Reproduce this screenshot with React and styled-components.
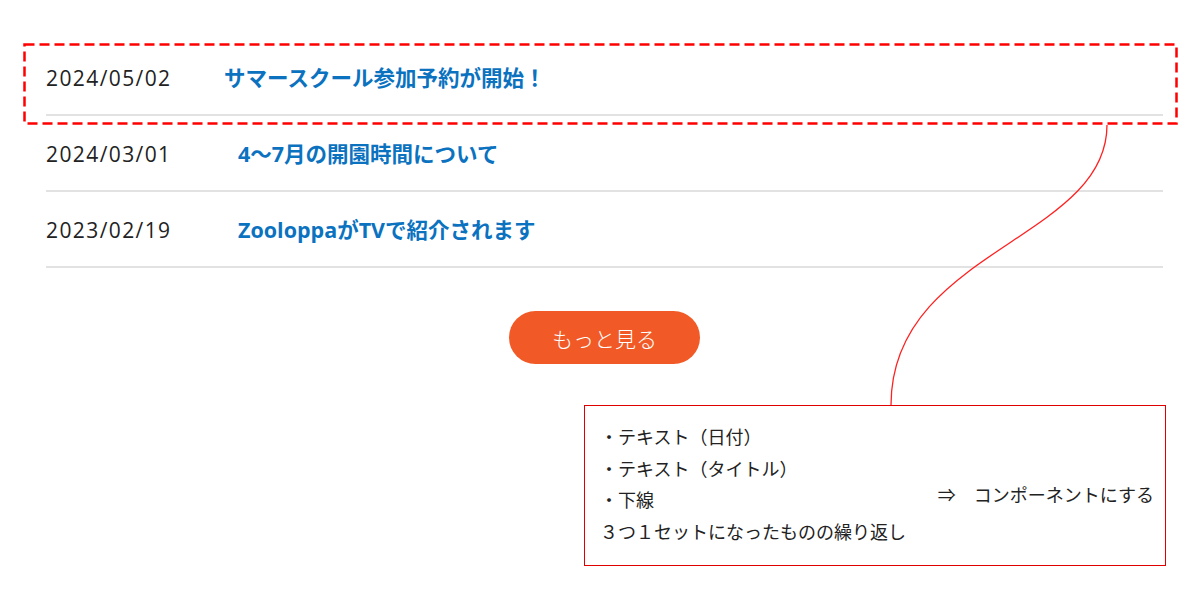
import React from 'react'
import styled, { createGlobalStyle } from 'styled-components'

const news = [
  { date: '2024/05/02', title: 'サマースクール参加予約が開始！', indent: 53 },
  { date: '2024/03/01', title: '4〜7月の開園時間について', indent: 67 },
  { date: '2023/02/19', title: 'ZooloppaがTVで紹介されます', indent: 67 },
]

const notes = [
  '・テキスト（日付）',
  '・テキスト（タイトル）',
  '・下線',
  '３つ１セットになったものの繰り返し',
]

function App() {
  return (
    <>
      <GlobalStyle />
      <Page>
        <NewsList>
          {news.map((item) => (
            <NewsRow key={item.date}>
              <NewsDate>{item.date}</NewsDate>
              <NewsTitle $indent={item.indent}>{item.title}</NewsTitle>
            </NewsRow>
          ))}
        </NewsList>
        <ButtonArea>
          <MoreButton>もっと見る</MoreButton>
        </ButtonArea>
        <NoteArea>
          <NoteBox>
            <NoteLines>
              {notes.map((n) => (
                <NoteLine key={n}>{n}</NoteLine>
              ))}
            </NoteLines>
            <NoteResult>⇒　コンポーネントにする</NoteResult>
          </NoteBox>
        </NoteArea>
        <Overlay width="1200" height="600" viewBox="0 0 1200 600">
          <rect
            x="24.5"
            y="44.5"
            width="1152"
            height="79"
            fill="none"
            stroke="#ff0000"
            strokeWidth="2.5"
            strokeDasharray="10 5"
          />
          <path
            d="M1107 125 C1107 240, 891 250, 891 405"
            fill="none"
            stroke="#ff2020"
            strokeWidth="1.3"
          />
        </Overlay>
      </Page>
    </>
  )
}

const GlobalStyle = createGlobalStyle`
  body {
    margin: 0;
    background: #ffffff;
    font-family: "Open Sans", "Noto Sans CJK JP", sans-serif;
  }
`

const Page = styled.div`
  position: relative;
  width: 1200px;
  height: 600px;
  padding: 40px 37px 0 46px;
  box-sizing: border-box;
  overflow: hidden;
`

const NewsList = styled.ul`
  list-style: none;
  margin: 0;
  padding: 0;
`

const NewsRow = styled.li`
  display: flex;
  align-items: center;
  height: 76px;
  box-sizing: border-box;
  border-bottom: 2px solid #e2e2e2;
`

const NewsDate = styled.span`
  width: 125px;
  font-size: 21px;
  color: #222222;
  letter-spacing: 1.4px;
  white-space: nowrap;
  margin-top: 2px;
`

const NewsTitle = styled.a`
  margin-left: ${(p) => p.$indent}px;
  margin-bottom: 2px;
  font-size: 21.5px;
  font-weight: 700;
  color: #0b72c0;
  text-decoration: none;
  white-space: nowrap;
`

const ButtonArea = styled.div`
  display: flex;
  justify-content: center;
  margin-top: 43px;
`

const MoreButton = styled.button`
  width: 191px;
  height: 53px;
  border: none;
  border-radius: 27px;
  background: #f15a26;
  color: #ffffff;
  font-family: "Noto Sans CJK JP", sans-serif;
  font-size: 21px;
  font-weight: 300;
  cursor: pointer;
`

const NoteArea = styled.div`
  display: flex;
  justify-content: flex-end;
  margin-top: 41px;
  margin-right: -3px;
`

const NoteBox = styled.div`
  display: flex;
  align-items: center;
  width: 582px;
  height: 161px;
  box-sizing: border-box;
  border: 1px solid #e00000;
  padding: 15px 11px 0 15px;
  font-family: "Noto Sans CJK JP", sans-serif;
  font-size: 18px;
  color: #222222;
`

const NoteLines = styled.div`
  display: flex;
  flex-direction: column;
  flex: 1;
  align-self: flex-start;
`

const NoteLine = styled.div`
  line-height: 31.5px;
  white-space: nowrap;
`

const NoteResult = styled.div`
  white-space: nowrap;
  margin-top: 2px;
`

const Overlay = styled.svg`
  position: absolute;
  left: 0;
  top: 0;
  pointer-events: none;
`

export default App
